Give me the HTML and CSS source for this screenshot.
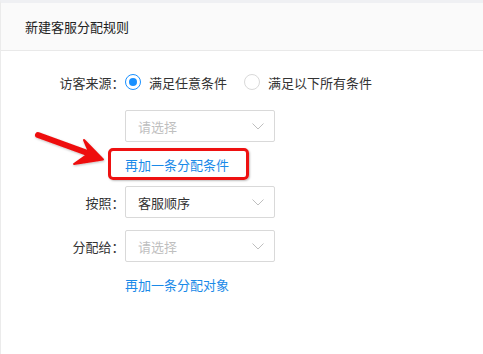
FILE: index.html
```html
<!DOCTYPE html>
<html lang="zh-CN">
<head>
<meta charset="utf-8">
<link rel="stylesheet" href="styles.css">
</head>
<body>
<div class="page">
  <div class="header">新建客服分配规则</div>
  <div class="form">
    <div class="row row-source">
      <div class="label">访客来源：</div>
      <div class="radios">
        <label class="radio checked"><span class="dot"></span><span>满足任意条件</span></label>
        <label class="radio"><span class="dot"></span><span>满足以下所有条件</span></label>
      </div>
    </div>
    <div class="row row-gap">
      <div class="label"></div>
      <div class="select placeholder"><span>请选择</span><svg class="chev" width="12" height="7" viewBox="0 0 12 7"><path d="M0.5 0.5 L6 6 L11.5 0.5" fill="none" stroke="#bfbfbf" stroke-width="1"/></svg></div>
    </div>
    <div class="row row-link">
      <div class="label"></div>
      <div class="link-wrap">
        <a class="link">再加一条分配条件</a>
        <span class="highlight"></span>
      </div>
    </div>
    <div class="row row-small">
      <div class="label">按照：</div>
      <div class="select"><span>客服顺序</span><svg class="chev" width="12" height="7" viewBox="0 0 12 7"><path d="M0.5 0.5 L6 6 L11.5 0.5" fill="none" stroke="#bfbfbf" stroke-width="1"/></svg></div>
    </div>
    <div class="row row-gap">
      <div class="label">分配给：</div>
      <div class="select placeholder"><span>请选择</span><svg class="chev" width="12" height="7" viewBox="0 0 12 7"><path d="M0.5 0.5 L6 6 L11.5 0.5" fill="none" stroke="#bfbfbf" stroke-width="1"/></svg></div>
    </div>
    <div class="row row-link">
      <div class="label"></div>
      <a class="link">再加一条分配对象</a>
    </div>
  </div>
  <svg class="arrow" width="90" height="50" viewBox="30 122 90 50">
    <defs>
      <filter id="sh" x="-20%" y="-20%" width="140%" height="140%">
        <feDropShadow dx="0.5" dy="1" stdDeviation="0.8" flood-color="#000" flood-opacity="0.25"/>
      </filter>
    </defs>
    <g filter="url(#sh)" fill="#ee1111" stroke="#ee1111" stroke-linejoin="round" stroke-linecap="round">
      <path d="M38 135 L93 155" stroke-width="6" fill="none"/>
      <path d="M103 159.5 L84 140 L89.5 153 L74 164 Z" stroke-width="2"/>
    </g>
  </svg>
</div>
</body>
</html>
```
FILE: styles.css
```css
* { box-sizing: border-box; }
html, body { margin: 0; padding: 0; background: #fff; }
body {
  font-family: "Noto Sans CJK SC", "Noto Sans", sans-serif;
  font-size: 13px;
  color: #333;
}
.page {
  position: relative;
  width: 483px;
  height: 354px;
  border-top: 3px solid #eff0f3;
  border-left: 1px solid #ebebeb;
  overflow: hidden;
}
.header {
  height: 48px;
  background: #fafafa;
  border-bottom: 1px solid #e9e9e9;
  padding-left: 24px;
  display: flex;
  align-items: center;
  color: #222;
  font-size: 13px;
}
.form { padding-top: 15px; }
.row {
  display: flex;
  align-items: center;
  height: 32px;
}
.row-gap { margin-top: 12px; }
.row-link { margin-top: 6px; }
.row-small { margin-top: 6px; }
.label {
  width: 117px;
  margin-right: 7px;
  text-align: right;
  color: #333;
  white-space: nowrap;
  font-feature-settings: "halt";
}
.radios { display: flex; align-items: center; }
.radio {
  display: flex;
  align-items: center;
  margin-right: 17px;
  color: #333;
}
.dot {
  width: 16px;
  height: 16px;
  border: 1px solid #d9d9d9;
  border-radius: 50%;
  margin-right: 8px;
  position: relative;
  background: #fff;
}
.radio.checked .dot { border-color: #1890ff; }
.radio.checked .dot::after {
  content: "";
  position: absolute;
  left: 3px; top: 3px;
  width: 8px; height: 8px;
  border-radius: 50%;
  background: #1890ff;
}
.select {
  width: 150px;
  height: 32px;
  border: 1px solid #d9d9d9;
  border-radius: 2px;
  display: flex;
  align-items: center;
  justify-content: space-between;
  padding: 0 10px 0 12px;
  color: #333;
}
.select.placeholder { color: #bfbfbf; }
.chev { display: block; }
.link-wrap { position: relative; }
.link {
  color: #1a8ae8;
  text-decoration: none;
  white-space: nowrap;
}
.highlight {
  position: absolute;
  left: -17px;
  top: 50%;
  margin-top: -16px;
  width: 141px;
  height: 32px;
  border: 3px solid #ee1111;
  border-radius: 5px;
  box-shadow: 1px 1px 2px rgba(0,0,0,0.25);
}
.arrow {
  position: absolute;
  left: 29px;
  top: 119px;
}
```
